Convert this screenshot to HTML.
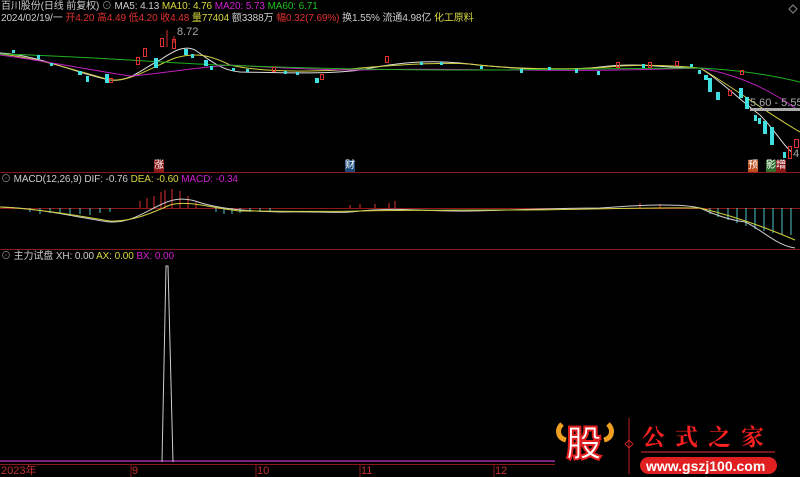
<!DOCTYPE html>
<html><head><meta charset="utf-8"><style>
body{margin:0;background:#000;width:800px;height:477px;overflow:hidden;font-family:"Liberation Sans","Noto Sans CJK SC",sans-serif;}
svg{position:absolute;left:0;top:0}
.t{position:absolute;font-size:11px;white-space:nowrap;line-height:12px}
.h{font-size:10px;letter-spacing:-0.1px}
</style></head><body>
<svg width="800" height="477">
<line x1="0" y1="172.5" x2="800" y2="172.5" stroke="#8a1a1a"/>
<line x1="0" y1="249.5" x2="800" y2="249.5" stroke="#8a1a1a"/>
<line x1="0" y1="464.5" x2="555" y2="464.5" stroke="#8a1a1a"/>
<line x1="0" y1="461" x2="555" y2="461" stroke="#a030a0" stroke-width="1.5"/>
<g stroke="#8a1a1a"><line x1="131" y1="464" x2="131" y2="477"/><line x1="256" y1="464" x2="256" y2="477"/><line x1="360" y1="464" x2="360" y2="477"/><line x1="494" y1="464" x2="494" y2="477"/></g>
<path d="M0,53 C40,55 80,75 110,80 C130,82 140,70 160,60 C175,50 185,45 195,50 C210,60 220,70 240,72 C290,73 330,74 360,70 C400,62 430,60 460,63 C500,68 560,72 600,67 C640,62 660,68 700,68 C720,80 740,100 760,115 C775,130 785,148 792,152" stroke="#ddd" fill="none"/>
<path d="M0,54 C40,58 80,72 110,80 C130,82 150,68 175,58 C195,52 210,55 230,65 C260,72 300,72 340,70 C400,64 440,62 470,64 C520,70 580,70 620,66 C660,64 690,67 700,68 C730,85 770,115 800,132" stroke="#d0d040" fill="none"/>
<path d="M0,55 C40,60 90,70 130,76 C160,74 190,68 230,65 C280,68 320,70 360,70 C420,68 470,70 520,70 C580,71 640,70 700,68 C740,75 770,90 795,108" stroke="#c020c0" fill="none"/>
<path d="M0,54 C80,56 150,62 220,65 C300,68 380,70 460,70 C560,70 640,68 700,68 C740,70 770,75 800,82" stroke="#20b020" fill="none"/>
<g fill="#40e0e0">
<rect x="12" y="50" width="3" height="3"/><rect x="37" y="55" width="3" height="4"/><rect x="50" y="63" width="3" height="3"/><rect x="78" y="71" width="4" height="4"/><rect x="86" y="76" width="3" height="6"/><rect x="105" y="74" width="4" height="9"/><rect x="154" y="58" width="4" height="10"/><rect x="184" y="49" width="4" height="6"/><rect x="191" y="54" width="3" height="4"/><rect x="204" y="60" width="4" height="6"/><rect x="210" y="66" width="3" height="4"/><rect x="315" y="78" width="4" height="5"/><rect x="548" y="67" width="3" height="3"/><rect x="642" y="64" width="3" height="4"/><rect x="698" y="70" width="3" height="4"/><rect x="704" y="75" width="4" height="5"/><rect x="708" y="78" width="4" height="14"/><rect x="716" y="92" width="4" height="8"/><rect x="739" y="88" width="4" height="10"/><rect x="745" y="97" width="4" height="12"/><rect x="754" y="115" width="3" height="6"/><rect x="758" y="118" width="3" height="6"/><rect x="763" y="121" width="4" height="13"/><rect x="770" y="127" width="4" height="18"/><rect x="783" y="152" width="3" height="6"/>
<rect x="232" y="68" width="3" height="3"/><rect x="246" y="69" width="3" height="3"/><rect x="284" y="71" width="3" height="3"/><rect x="296" y="72" width="3" height="3"/><rect x="420" y="62" width="3" height="3"/><rect x="440" y="62" width="3" height="3"/><rect x="480" y="66" width="3" height="3"/><rect x="520" y="69" width="3" height="4"/><rect x="575" y="69" width="3" height="4"/><rect x="597" y="71" width="3" height="4"/><rect x="690" y="64" width="3" height="3"/>
</g>
<g fill="none" stroke="#e03030">
<rect x="136.5" y="57.5" width="3" height="7"/><rect x="143.5" y="48.5" width="3" height="8"/><rect x="160.5" y="38.5" width="3" height="8"/><rect x="172.5" y="39.5" width="3" height="9"/><rect x="109.5" y="78.5" width="3" height="4"/><rect x="272.5" y="67.5" width="3" height="4"/><rect x="320.5" y="74.5" width="3" height="5"/><rect x="385.5" y="56.5" width="3" height="6"/><rect x="616.5" y="62.5" width="3" height="5"/><rect x="728.5" y="90.5" width="3" height="5"/><rect x="788.5" y="146.5" width="3" height="12"/><rect x="794.5" y="139.5" width="4" height="8"/>
<rect x="648.5" y="62.5" width="3" height="5"/><rect x="740.5" y="70.5" width="3" height="4"/><rect x="675.5" y="61.5" width="3" height="4"/>
</g>
<line x1="167" y1="30" x2="167" y2="47" stroke="#e03030"/><line x1="174" y1="36" x2="174" y2="43" stroke="#e03030"/>
<line x1="0" y1="208.5" x2="800" y2="208.5" stroke="#8a1a1a"/>
<g stroke="#e03030"><line x1="140" y1="208" x2="140" y2="201"/><line x1="147" y1="208" x2="147" y2="198"/><line x1="154" y1="208" x2="154" y2="196"/><line x1="161" y1="208" x2="161" y2="192"/><line x1="165" y1="208" x2="165" y2="190"/><line x1="172" y1="208" x2="172" y2="189"/><line x1="180" y1="208" x2="180" y2="191"/><line x1="188" y1="208" x2="188" y2="196"/><line x1="196" y1="208" x2="196" y2="202"/><line x1="350" y1="208" x2="350" y2="205"/><line x1="360" y1="208" x2="360" y2="204"/><line x1="375" y1="208" x2="375" y2="204"/><line x1="389" y1="208" x2="389" y2="203"/><line x1="395" y1="208" x2="395" y2="201"/><line x1="640" y1="208" x2="640" y2="203"/><line x1="660" y1="208" x2="660" y2="204"/></g>
<g stroke="#50c8c8"><line x1="30" y1="208" x2="30" y2="212"/><line x1="40" y1="208" x2="40" y2="214"/><line x1="50" y1="208" x2="50" y2="213"/><line x1="60" y1="208" x2="60" y2="214"/><line x1="70" y1="208" x2="70" y2="215"/><line x1="80" y1="208" x2="80" y2="214"/><line x1="90" y1="208" x2="90" y2="215"/><line x1="100" y1="208" x2="100" y2="213"/><line x1="110" y1="208" x2="110" y2="212"/><line x1="216" y1="208" x2="216" y2="212"/><line x1="224" y1="208" x2="224" y2="214"/><line x1="232" y1="208" x2="232" y2="214"/><line x1="240" y1="208" x2="240" y2="213"/><line x1="250" y1="208" x2="250" y2="212"/><line x1="260" y1="208" x2="260" y2="212"/><line x1="270" y1="208" x2="270" y2="211"/><line x1="710" y1="208" x2="710" y2="214"/><line x1="718" y1="208" x2="718" y2="217"/><line x1="728" y1="208" x2="728" y2="220"/><line x1="737" y1="208" x2="737" y2="223"/><line x1="746" y1="208" x2="746" y2="226"/><line x1="755" y1="208" x2="755" y2="229"/><line x1="764" y1="208" x2="764" y2="231"/><line x1="773" y1="208" x2="773" y2="233"/><line x1="782" y1="208" x2="782" y2="234"/><line x1="791" y1="208" x2="791" y2="235"/></g>
<path d="M0,207 C40,208 80,218 110,222 C130,223 145,212 160,205 C170,200 180,197 195,201 C215,208 240,211 280,212 C320,211 340,214 360,211 C400,207 430,212 470,211 C520,210 560,208 600,208 C640,205 680,203 700,208 C715,215 730,220 745,222 C760,228 775,245 795,248" stroke="#ccc" fill="none"/>
<path d="M0,207 C40,209 80,216 110,221 C130,222 150,214 170,205 C190,200 210,208 240,211 C280,211 320,212 360,211 C420,210 470,210 520,210 C580,210 640,207 700,208 C730,215 760,225 795,240" stroke="#d0d040" fill="none"/>
<path d="M162,462 L166,266 L168,266 L173,462" stroke="#ccc" fill="none"/>
<line x1="629" y1="418" x2="629" y2="474" stroke="#c02020"/>
<path d="M629,440 l4,4 l-4,4 l-4,-4z" fill="none" stroke="#c02020"/>
<line x1="641" y1="452" x2="775" y2="452" stroke="#a02020" stroke-width="1.5"/>
<rect x="640" y="457" width="137" height="17" rx="8.5" fill="#e02020"/>
<path d="M562,424 c-6,6 -4,14 4,16 M608,424 c6,6 4,14 -4,16" stroke="#f0a020" stroke-width="5" fill="none"/>
<path d="M793,5 l4,4 l-4,4 l-4,-4z" fill="none" stroke="#888"/>
</svg>
<div class="t h" style="left:1px;top:1px;color:#ccc">百川股份(日线 前复权) <span style="color:#888">⊙</span> MA5: 4.13 <span style="color:#d8d840">MA10: 4.76</span> <span style="color:#d020d0">MA20: 5.73</span> <span style="color:#20c020">MA60: 6.71</span></div>
<div class="t h" style="left:1px;top:13px;color:#ccc">2024/02/19/一 <span style="color:#e03030">开4.20 高4.49 低4.20 收4.48</span> <span style="color:#d8d840">量77404</span> 额3388万 <span style="color:#e03030">幅0.32(7.69%)</span> 换1.55% 流通4.98亿 <span style="color:#d8d840">化工原料</span></div>
<div class="t" style="left:177px;top:26px;color:#aaa">8.72</div>
<div class="t" style="left:750px;top:97px;color:#aaa">5.60 - 5.55</div>
<div style="position:absolute;left:750px;top:108px;width:50px;height:3px;background:#aaa"></div>
<div class="t" style="left:793px;top:148px;color:#aaa">4.</div>
<div class="t" style="left:154px;top:160px;color:#fff;background:#8a1a1a;font-size:10px">涨</div>
<div class="t" style="left:345px;top:160px;color:#fff;background:#1a4a7a;font-size:10px">财</div>
<div class="t" style="left:748px;top:160px;color:#fff;background:#c05020;font-size:10px">预</div>
<div class="t" style="left:766px;top:160px;color:#fff;background:#307030;font-size:10px">影</div>
<div class="t" style="left:776px;top:160px;color:#fff;background:#8a1a1a;font-size:10px">增</div>
<div class="t h" style="left:1px;top:174px;color:#ccc"><span style="color:#888">⊙</span> MACD(12,26,9) DIF: -0.76 <span style="color:#d8d840">DEA: -0.60</span> <span style="color:#d020d0">MACD: -0.34</span></div>
<div class="t h" style="left:1px;top:251px;color:#ccc"><span style="color:#888">⊙</span> 主力试盘 XH: 0.00 <span style="color:#d8d840">AX: 0.00</span> <span style="color:#d020d0">BX: 0.00</span></div>
<div class="t" style="left:1px;top:465px;color:#c03030">2023年</div>
<div class="t" style="left:132px;top:465px;color:#c03030">9</div>
<div class="t" style="left:257px;top:465px;color:#c03030">10</div>
<div class="t" style="left:361px;top:465px;color:#c03030">11</div>
<div class="t" style="left:495px;top:465px;color:#c03030">12</div>
<div class="t" style="left:566px;top:424px;color:#fff;font-size:36px;line-height:40px;font-weight:bold;-webkit-text-stroke:2px #e02020">股</div>
<div class="t" style="left:642px;top:423px;color:#ff2020;font-size:23px;line-height:26px;letter-spacing:10px;font-family:'Noto Serif CJK SC',serif;font-weight:bold">公式之家</div>
<div class="t" style="left:646px;top:458px;color:#fff;font-size:14px;line-height:16px;font-weight:bold">www.gszj100.com</div>
</body></html>
